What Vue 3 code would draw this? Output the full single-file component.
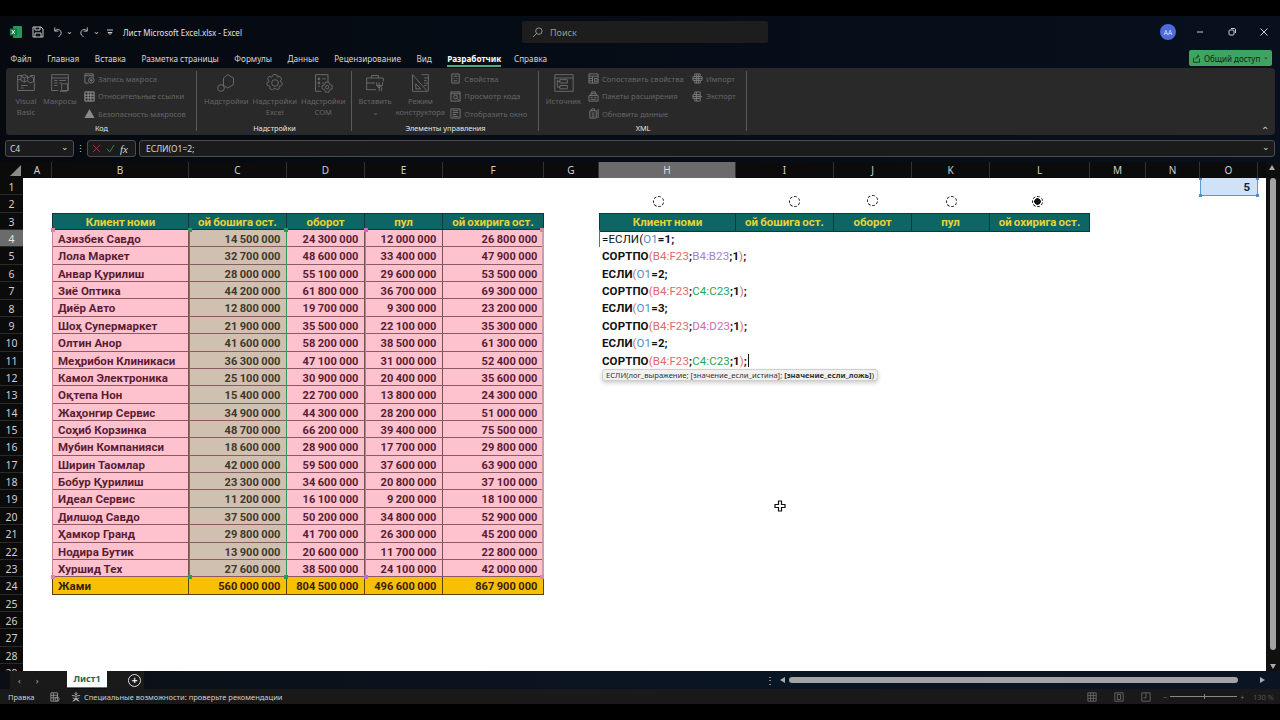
<script setup>
const columns = [
  { name: "A", w: 29 }, { name: "B", w: 137 }, { name: "C", w: 98 }, { name: "D", w: 78 },
  { name: "E", w: 78 }, { name: "F", w: 101 }, { name: "G", w: 55 }, { name: "H", w: 137, on: true },
  { name: "I", w: 98 }, { name: "J", w: 78 }, { name: "K", w: 78 }, { name: "L", w: 100 },
  { name: "M", w: 56 }, { name: "N", w: 54 }, { name: "O", w: 58 },
];
const rowNumbers = Array.from({ length: 29 }, (_, i) => i + 1);
const tabs = ["Файл", "Главная", "Вставка", "Разметка страницы", "Формулы", "Данные", "Рецензирование", "Вид", "Разработчик", "Справка"];
const heads = ["Клиент номи", "ой бошига ост.", "оборот", "пул", "ой охирига ост."];

const rows = [
  ["Азизбек Савдо", "14 500 000", "24 300 000", "12 000 000", "26 800 000"],
  ["Лола Маркет", "32 700 000", "48 600 000", "33 400 000", "47 900 000"],
  ["Анвар Қурилиш", "28 000 000", "55 100 000", "29 600 000", "53 500 000"],
  ["Зиё Оптика", "44 200 000", "61 800 000", "36 700 000", "69 300 000"],
  ["Диёр Авто", "12 800 000", "19 700 000", "9 300 000", "23 200 000"],
  ["Шоҳ Супермаркет", "21 900 000", "35 500 000", "22 100 000", "35 300 000"],
  ["Олтин Анор", "41 600 000", "58 200 000", "38 500 000", "61 300 000"],
  ["Меҳрибон Клиникаси", "36 300 000", "47 100 000", "31 000 000", "52 400 000"],
  ["Камол Электроника", "25 100 000", "30 900 000", "20 400 000", "35 600 000"],
  ["Оқтепа Нон", "15 400 000", "22 700 000", "13 800 000", "24 300 000"],
  ["Жаҳонгир Сервис", "34 900 000", "44 300 000", "28 200 000", "51 000 000"],
  ["Соҳиб Корзинка", "48 700 000", "66 200 000", "39 400 000", "75 500 000"],
  ["Мубин Компанияси", "18 600 000", "28 900 000", "17 700 000", "29 800 000"],
  ["Ширин Таомлар", "42 000 000", "59 500 000", "37 600 000", "63 900 000"],
  ["Бобур Қурилиш", "23 300 000", "34 600 000", "20 800 000", "37 100 000"],
  ["Идеал Сервис", "11 200 000", "16 100 000", "9 200 000", "18 100 000"],
  ["Дилшод Савдо", "37 500 000", "50 200 000", "34 800 000", "52 900 000"],
  ["Ҳамкор Гранд", "29 800 000", "41 700 000", "26 300 000", "45 200 000"],
  ["Нодира Бутик", "13 900 000", "20 600 000", "11 700 000", "22 800 000"],
  ["Хуршид Тех", "27 600 000", "38 500 000", "24 100 000", "42 000 000"],
];
const totals = ["Жами", "560 000 000", "804 500 000", "496 600 000", "867 900 000"];

const sortLines = [
  { col: "B4:B23", cls: "ref-purple" },
  { col: "C4:C23", cls: "ref-green" },
  { col: "D4:D23", cls: "ref-pink" },
  { col: "C4:C23", cls: "ref-green" },
];
const radios = [
  { left: 630, top: 18 },
  { left: 766, top: 18 },
  { left: 844, top: 17 },
  { left: 923, top: 18 },
  { left: 1009, top: 18, on: true },
];
</script>

<template>
  <div class="screen">
    <div class="window">
      <header class="titlebar">
        <div class="quick">
          <svg class="xl" viewBox="0 0 12 12"><rect x="3" y="0" width="9" height="12" rx="1" fill="#1f9a5c" /><rect x="0" y="2.5" width="7" height="7" fill="#107c41" /><path d="M1.8 4l3 4M4.8 4l-3 4" stroke="#fff" stroke-width="1" /></svg>
          <svg class="qi save" viewBox="0 0 12 12"><path d="M1 1h8l2 2v8H1zM3 1v3h5V1M3 11V7h6v4" /></svg>
          <svg class="qi undo" viewBox="0 0 12 12"><path d="M3 1v4h4M3 5c2-3 7-2 7 2 0 2-1 3-3 4" /></svg>
          <span class="chev">⌄</span>
          <svg class="qi redo" viewBox="0 0 12 12"><path d="M9 1v4H5M9 5C7 2 2 3 2 7c0 2 1 3 3 4" /></svg>
          <span class="chev">⌄</span>
          <svg class="qi cust" viewBox="0 0 8 8"><path d="M1 2h6M2 4.5h4l-2 2z" /></svg>
          <span class="doc">Лист Microsoft Excel.xlsx - Excel</span>
        </div>
        <div class="search">
          <svg viewBox="0 0 12 12"><circle cx="7.5" cy="4.5" r="3.5" /><path d="M5 7l-4 4" /></svg>
          <span>Поиск</span>
        </div>
        <div class="winctl">
          <span class="avatar">AA</span>
          <svg viewBox="0 0 10 10"><path d="M2 5h6" /></svg>
          <svg viewBox="0 0 10 10"><rect x="2" y="3" width="5" height="5" rx="1" /><path d="M4 1.5h3.5a1 1 0 0 1 1 1V6" /></svg>
          <svg viewBox="0 0 10 10"><path d="M1.5 1.5l7 7M8.5 1.5l-7 7" /></svg>
        </div>
      </header>

      <nav class="menubar">
        <span v-for="t in tabs" :key="t" class="tab" :class="{ active: t === 'Разработчик' }">{{ t }}</span>
        <button class="share">
          <svg viewBox="0 0 12 12"><path d="M2 5v6h8V6M5 7c0-3 2-4 4-4M7 1l2.500 2L7 5" /></svg>
          Общий доступ <span class="share-chev">⌄</span>
        </button>
      </nav>

      <section class="ribbon">
        <div class="group g-code">
          <div class="tools">
            <div class="big w34">
              <svg viewBox="0 0 24 24"><path d="M2 3h5M17 3h5v18H2V3M2 8h4M6 4l4-2 4 2v5l-4 2-4-2zM6 4l4 2 4-2M10 6v5M14 6l4-2 3 2v4l-3 2-4-2M6 15h8M6 18h3" /></svg>
              <span>Visual<br />Basic</span>
            </div>
            <div class="big w34">
              <svg viewBox="0 0 24 24"><path d="M2 2h20v19h-8M2 2v19h8M2 6h20M5 9h4M11 9h8M5 12h4M11 12h3M5 15h4M14 13h7v7c0 2-2 3-4 2h-5c2-1 2-3 2-4z" /></svg>
              <span>Макросы</span>
            </div>
            <div class="smalls w110">
              <div class="small">
                <svg viewBox="0 0 12 12"><path d="M1 1h9v4M1 1v10h4M1 3h9" /><circle cx="8" cy="8" r="3" /><circle cx="8" cy="8" r="1" fill="#6a6a6a" /></svg>
                Запись макроса
              </div>
              <div class="small lit">
                <svg viewBox="0 0 12 12"><path d="M1 1h10v10H1zM1 4.500h10M1 7.500h10M4.500 1v10M7.500 1v10" /></svg>
                Относительные ссылки
              </div>
              <div class="small">
                <svg viewBox="0 0 12 12"><path class="solid" d="M6 1l5.500 10H.5z" /></svg>
                Безопасность макросов
              </div>
            </div>
          </div>
          <div class="glabel">Код</div>
        </div>

        <div class="group g-addins">
          <div class="tools">
            <div class="big w48">
              <svg viewBox="0 0 24 24"><path d="M14 2l7 4v8l-7 4-5-3V6z" /><circle cx="6" cy="18" r="4" /></svg>
              <span>Надстройки</span>
            </div>
            <div class="big w48">
              <svg viewBox="0 0 24 24"><circle cx="12" cy="12" r="4" /><path d="M10 2h4l1 3 3-1 2 3-2 3 3 2-1 3-3 1 0 3-3 1-2-2-3 2-3-1 0-3-3-1-1-3 3-2-2-3 2-3 3 1z" /></svg>
              <span>Надстройки<br />Excel</span>
            </div>
            <div class="big w48">
              <svg viewBox="0 0 24 24"><path d="M10 22H3V2h15v9M6 6h2v2H6zM11 7h4M6 11h2v2H6zM11 12h2M6 16h2" /><circle cx="17" cy="17" r="2" /><path d="M15 11h4l1 3 3 1v4l-3 1-1 3h-4l-1-3-3-1v-4l3-1z" /></svg>
              <span>Надстройки<br />COM</span>
            </div>
          </div>
          <div class="glabel">Надстройки</div>
        </div>

        <div class="group g-controls">
          <div class="tools">
            <div class="big w46">
              <svg viewBox="0 0 24 24"><path d="M2 6h20v4M2 6v14h11M2 12h10M8 6V3h8v3M17 11v11M21 11v4h-7v-4M14 15l3 3 3-3M20 17v5" /></svg>
              <span>Вставить<br /><i class="dim-chev">⌄</i></span>
            </div>
            <div class="big w46">
              <svg viewBox="0 0 24 24"><path d="M3 2l18 20H3zM7 13l6 6H7zM14 2h8v20M17 6h5M17 9h3M17 12h5M17 15h3" /></svg>
              <span>Режим<br />конструктора</span>
            </div>
            <div class="smalls w90">
              <div class="small">
                <svg viewBox="0 0 12 12"><path d="M2 1h8v10H2zM4 3.500h4M4 6h1M7 6h1M4 8.500h4" /></svg>
                Свойства
              </div>
              <div class="small">
                <svg viewBox="0 0 12 12"><path d="M1 1h10v10H1zM1 3h10" /><circle cx="6" cy="6.500" r="2" /><path d="M7.500 8L10 10.500" /></svg>
                Просмотр кода
              </div>
              <div class="small">
                <svg viewBox="0 0 12 12"><path d="M1 1h10v10H1zM3 3h6M3 5h6M3 7h4M3 9h6" /></svg>
                Отобразить окно
              </div>
            </div>
          </div>
          <div class="glabel">Элементы управления</div>
        </div>

        <div class="group g-xml">
          <div class="tools">
            <div class="big w43">
              <svg viewBox="0 0 24 24"><path d="M1 2h22v20H1zM1 6h22M7 8h9v4H7zM7 15h9v4H7zM4 8v9h3M4 10h3" /></svg>
              <span>Источник</span>
            </div>
            <div class="smalls w97">
              <div class="small">
                <svg viewBox="0 0 12 12"><path d="M1 1h10v10H1zM1 3.500h10M5 3.500V11M1 6h4M1 8.500h4M7 6h3v3H7z" /></svg>
                Сопоставить свойства
              </div>
              <div class="small">
                <svg viewBox="0 0 12 12"><path d="M1 5h10v6H1zM3 5V3h6v2M4 3V1h4v2M3 7h2M7 7h2M3 9h6" /></svg>
                Пакеты расширения
              </div>
              <div class="small">
                <svg viewBox="0 0 12 12"><path d="M2 3h7v8H2zM4 3V1h3v2M4 5.500h3M4 7.500h3M4 9.500h3M11 1v10" /></svg>
                Обновить данные
              </div>
            </div>
            <div class="smalls">
              <div class="small">
                <svg viewBox="0 0 12 12"><path d="M3 1h6v3H3zM1 4h10v4H1zM3 8h6v3H3zM5 1v10M7 1v10M1 6h10" /></svg>
                Импорт
              </div>
              <div class="small">
                <svg viewBox="0 0 12 12"><path d="M3 1h6v3H3zM1 4h8v4H1zM3 8h6v3H3zM5 1v10M1 6h10" /></svg>
                Экспорт
              </div>
            </div>
          </div>
          <div class="glabel">XML</div>
        </div>
        <span class="collapse">⌃</span>
      </section>

      <div class="formulabar">
        <div class="namebox"><span>C4</span><i>⌄</i></div>
        <span class="fdots">⋮</span>
        <div class="fxbox">
          <svg viewBox="0 0 10 10" class="x"><path d="M1 1l8 8M9 1l-8 8" /></svg>
          <svg viewBox="0 0 10 10" class="v"><path d="M1 5l3 4 5-8" /></svg>
          <em>fx</em>
        </div>
        <div class="finput">ЕСЛИ(О1=2;<i>⌄</i></div>
      </div>

      <div class="colheads">
        <div class="corner"><span></span></div>
        <div v-for="c in columns" :key="c.name" class="colhead" :class="{ on: c.on }" :style="{ width: c.w + 'px' }">{{ c.name }}</div>
        <div class="vs-top"><span class="arr-up"></span></div>
      </div>

      <div class="sheetrow">
        <div class="rowheads">
          <div v-for="n in rowNumbers" :key="n" class="rowhead" :class="{ on: n === 4 }">{{ n }}</div>
        </div>

        <main class="sheet">
          <div class="data-table">
            <div v-for="(h, i) in heads" :key="h" class="th" :class="{ first: i === 0 }">{{ h }}</div>
            <template v-for="row in rows" :key="row[0]">
              <div v-for="(v, i) in row" :key="i" class="td" :class="['c' + i]">{{ v }}</div>
            </template>
            <div v-for="(v, i) in totals" :key="v" class="td total" :class="['c' + i]">{{ v }}</div>

            <div class="range-layer">
              <div class="range r-all">
                <i class="h tl"></i><i class="h tr"></i><i class="h bl"></i><i class="h br"></i>
              </div>
              <div class="range r-c">
                <i class="h tl"></i><i class="h tr"></i><i class="h bl"></i><i class="h br"></i>
              </div>
              <div class="range r-e">
                <i class="h tl"></i><i class="h bl"></i>
              </div>
            </div>
          </div>

          <div class="side">
            <div class="side-head">
              <div v-for="(h, i) in heads" :key="h" class="th" :class="{ first: i === 0 }">{{ h }}</div>
            </div>
            <div class="edit">
              <div class="fl first-line">=ЕСЛИ(<span class="ref-blue">О1</span><b>=1;</b></div>
              <template v-for="(line, i) in sortLines" :key="i">
                <div v-if="i > 0" class="fl"><b>ЕСЛИ</b><span class="ref-red">(</span><span class="ref-blue">О1</span><b>={{ i === 1 ? 2 : i === 2 ? 3 : 2 }};</b></div>
                <div class="fl"><b>СОРТПО</b><span class="ref-red">(B4:F23</span><b>;</b><span :class="line.cls">{{ line.col }}</span><b>;1</b><span class="ref-red">)</span><b>;</b><span v-if="i === 3" class="caret"></span></div>
              </template>
              <div class="hint">ЕСЛИ(лог_выражение; [значение_если_истина]; <b>[значение_если_ложь]</b>)</div>
            </div>
          </div>

          <div class="o1">5<i class="h2 a"></i><i class="h2 b"></i><i class="h2 c"></i><i class="h2 d"></i></div>

          <span v-for="(r, i) in radios" :key="i" class="radio" :class="{ on: r.on }" :style="{ left: r.left + 'px', top: r.top + 'px' }"></span>

          <svg class="cursor" viewBox="0 0 12 12"><path d="M4.500 1h3v3.500H11v3H7.500V11h-3V7.500H1v-3h3.500z" /></svg>
        </main>

        <aside class="vscroll">
          <span class="vthumb"></span>
          <span class="arr-down"></span>
        </aside>
      </div>

      <div class="tabbar">
        <div class="nav"><span>‹</span><span>›</span></div>
        <div class="sheet-tab">Лист1</div>
        <div class="addwrap"><span class="add">+</span></div>
        <div class="hscroll">
          <span class="hdots">⋮</span>
          <span class="arr-left"></span>
          <span class="hthumb"></span>
          <span class="arr-right"></span>
        </div>
      </div>

      <footer class="status">
        <span class="st-mode">Правка</span>
        <svg class="st-ico" viewBox="0 0 12 12"><path d="M1 1h8v10H1zM1 4h8M1 7h8M4 1v10" /><circle cx="8.500" cy="8.500" r="2.500" /></svg>
        <svg class="st-ico acc" viewBox="0 0 12 12"><circle cx="6" cy="2" r="1.200" /><path d="M1 4l5 1 5-1M6 5v2l-3 4M6 7l3 4M2 7l8 4M10 7l-8 4" /></svg>
        <span class="st-text">Специальные возможности: проверьте рекомендации</span>
        <div class="st-right">
          <svg viewBox="0 0 12 12"><path d="M1 1h10v10H1zM1 4.300h10M1 7.600h10M4.300 1v10M7.600 1v10" /></svg>
          <svg viewBox="0 0 12 12"><path d="M1 1h10v10H1zM4 3h4v6H4z" /></svg>
          <svg viewBox="0 0 12 12"><path d="M1 1h10v10H1zM6 1v6H3" /></svg>
          <div class="zoom"><span>−</span><div class="slider"><i></i></div><span>+</span></div>
          <span class="pct">130 %</span>
        </div>
      </footer>
    </div>
  </div>
</template>

<style>
html,
body {
  margin: 0;
  background: #000;
}
</style>

<style scoped>
.screen {
  width: 1280px;
  height: 720px;
  padding: 16px 0;
  box-sizing: border-box;
  background: #000;
  overflow: hidden;
  font-family: "Noto Sans", "Open Sans", sans-serif;
}
.window {
  height: 688px;
  display: flex;
  flex-direction: column;
  background: linear-gradient(90deg, #060a10, #060d18 60%, #07101c);
  color: #ddd;
}
svg {
  fill: none;
  stroke: currentColor;
  stroke-width: 1;
}

/* title */
.titlebar {
  height: 32px;
  display: flex;
  align-items: center;
  position: relative;
  flex: none;
}
.quick {
  display: flex;
  align-items: center;
  padding-left: 10px;
  color: #c8c8c8;
}
.xl {
  width: 12px;
  height: 12px;
  margin-right: 10px;
  stroke: none;
  fill: #107c41;
}
.xl rect {
  stroke: none;
}
.qi {
  width: 11px;
  height: 12px;
}
.save {
  margin-left: 0;
  width: 12px;
}
.undo {
  margin-left: 8px;
}
.redo {
  margin-left: 6px;
}
.cust {
  width: 8px;
  height: 8px;
  margin-left: 6px;
}
.chev {
  font-size: 8px;
  margin: -4px 0 0 3px;
  width: 7px;
}
.doc {
  font-size: 8px;
  margin-left: 9px;
  color: #e2e2e2;
}
.search {
  position: absolute;
  left: 522px;
  top: 5px;
  width: 246px;
  height: 22px;
  box-sizing: border-box;
  padding-left: 10px;
  background: #1d1d1d;
  border-radius: 2px;
  display: flex;
  align-items: center;
  gap: 7px;
  font-size: 9px;
  color: #9a9a9a;
}
.search svg {
  width: 11px;
  height: 11px;
}
.winctl {
  margin-left: auto;
  display: flex;
  align-items: center;
  padding-right: 11px;
  color: #cfcfcf;
}
.winctl svg {
  width: 10px;
  height: 10px;
  margin-left: 22px;
}
.avatar {
  width: 16px;
  height: 16px;
  border-radius: 50%;
  background: #4f6bd8;
  color: #dfe6ff;
  font-size: 6.5px;
  display: flex;
  align-items: center;
  justify-content: center;
  margin-right: -3px;
}

/* menu */
.menubar {
  height: 20px;
  flex: none;
  display: flex;
  align-items: center;
  padding-left: 10.500px;
  gap: 15.500px;
  font-size: 8.200px;
  color: #d6d6d6;
  position: relative;
}
.tab {
  position: relative;
}
.tab.active {
  color: #fff;
  font-weight: 700;
  margin-right: -3px;
}
.tab.active::after {
  content: "";
  position: absolute;
  left: 0;
  right: 0;
  bottom: -3px;
  height: 1.5px;
  background: #4caf76;
}
.share {
  position: absolute;
  left: 1189px;
  top: 2px;
  width: 83px;
  height: 16px;
  background: #3fa45f;
  border: 0;
  border-radius: 2px;
  color: #10240f;
  font: inherit;
  font-size: 8px;
  display: flex;
  align-items: center;
  gap: 3px;
  padding: 0 2px 0 3px;
  white-space: nowrap;
}
.share svg {
  width: 9px;
  height: 9px;
}
.share-chev {
  font-size: 7px;
  margin-top: -4px;
}

/* ribbon */
.ribbon {
  margin: 0 5px 0 6px;
  height: 67px;
  flex: none;
  background: #292929;
  border-radius: 4px;
  display: flex;
  position: relative;
  font-size: 7.600px;
  color: #666;
}
.group {
  display: flex;
  flex-direction: column;
  position: relative;
  box-sizing: border-box;
  padding-top: 3px;
}
.group::after {
  content: "";
  position: absolute;
  right: 0;
  top: 3px;
  bottom: 4px;
  width: 1px;
  background: #5a5a5a;
}
.g-code {
  width: 191px;
  padding-left: 3px;
}
.g-addins {
  width: 155px;
  padding-left: 5px;
}
.g-controls {
  width: 187px;
  padding-left: 1px;
}
.g-xml {
  width: 208px;
  padding-left: 3px;
}
.tools {
  display: flex;
  flex: 1;
  gap: 0;
}
.big {
  display: flex;
  flex-direction: column;
  align-items: center;
  text-align: center;
  line-height: 10.500px;
  color: #666;
  white-space: nowrap;
}
.big svg {
  width: 20px;
  height: 20px;
  margin: 2px 0 3px;
  color: #757575;
}
.dim-chev {
  font-style: normal;
}
.w34 {
  width: 34px;
}
.w48 {
  width: 48.500px;
}
.w46 {
  width: 46px;
}
.w43 {
  width: 43px;
}
.smalls {
  display: flex;
  flex-direction: column;
  gap: 0;
  margin: -1px 0 0 7px;
}
.w110 {
  width: 110px;
}
.w90 {
  width: 92px;
}
.w97 {
  width: 97px;
  margin-left: 3px;
}
.small {
  height: 17.500px;
  display: flex;
  align-items: center;
  gap: 3px;
  white-space: nowrap;
  color: #666;
}
.small svg {
  width: 11px;
  height: 11px;
  flex: none;
  color: #7a7a7a;
}
.small.lit svg {
  color: #a0a0a0;
}
.solid {
  fill: #8a8a8a;
  stroke: none;
}
.glabel {
  position: absolute;
  left: 0;
  right: 0;
  bottom: 2px;
  text-align: center;
  color: #e6e6e6;
  font-size: 7.300px;
  line-height: 10px;
}
.collapse {
  position: absolute;
  right: 6px;
  bottom: -2px;
  color: #cfcfcf;
  font-size: 10px;
}

/* formula */
.formulabar {
  height: 17px;
  flex: none;
  margin-top: 5px;
  padding: 0 5px;
  display: flex;
  align-items: stretch;
  font-size: 8.500px;
  color: #d8d8d8;
}
.namebox,
.fxbox,
.finput {
  background: #1b1b1b;
  border: 1px solid #4d4d4d;
  border-radius: 3px;
  box-sizing: border-box;
  display: flex;
  align-items: center;
}
.namebox {
  width: 69px;
  padding: 0 4px;
  justify-content: space-between;
}
.namebox i,
.finput i {
  font-style: normal;
  margin-top: -4px;
}
.fdots {
  width: 13px;
  text-align: center;
  line-height: 17px;
}
.fxbox {
  width: 49px;
  padding-left: 4px;
  gap: 5px;
}
.fxbox svg {
  width: 9px;
  height: 9px;
}
.fxbox .x {
  color: #a04040;
}
.fxbox .v {
  color: #3e8f5e;
}
.fxbox em {
  font-family: "Liberation Serif", serif;
  font-size: 11px;
}
.finput {
  margin-left: 3px;
  flex: 1;
  padding: 0 4px 0 6px;
  justify-content: space-between;
}

/* column heads */
.colheads {
  height: 16px;
  flex: none;
  margin-top: 5px;
  display: flex;
  background: #0b0b0b;
  font-size: 10px;
  color: #cfcfcf;
}
.corner {
  width: 23px;
  flex: none;
  position: relative;
}
.corner span {
  position: absolute;
  right: 2px;
  bottom: 2px;
  border-style: solid;
  border-width: 0 0 11px 11px;
  border-color: transparent transparent #8b8b8b transparent;
}
.colhead {
  flex: none;
  box-sizing: border-box;
  border-right: 1px solid #333;
  text-align: center;
  line-height: 17px;
}
.colhead.on {
  background: #6b6b6b;
  color: #ddd;
  border-bottom: 1px solid #2f8f5f;
}
.vs-top {
  flex: 1;
  position: relative;
  background: #0e0e0e;
  margin-left: 8px;
}
.arr-up {
  position: absolute;
  left: 3px;
  top: 3px;
  border-style: solid;
  border-width: 0 3px 5px 3px;
  border-color: transparent transparent #aaa transparent;
}

/* sheet */
.sheetrow {
  flex: 1;
  min-height: 0;
  display: flex;
  overflow: hidden;
}
.rowheads {
  width: 23px;
  flex: none;
  background: #0b0b0b;
  overflow: hidden;
  font-size: 10.500px;
  color: #cfcfcf;
}
.rowhead {
  height: 17.360px;
  line-height: 18px;
  text-align: center;
  box-sizing: border-box;
  border-bottom: 1px solid #2a2a2a;
}
.rowhead.on {
  background: #6b6b6b;
  color: #e6e6e6;
}
.sheet {
  width: 1243px;
  flex: none;
  position: relative;
  background: #fff;
  display: flex;
  align-items: flex-start;
  padding: 34.700px 0 0 29px;
  box-sizing: border-box;
  font-family: Roboto, sans-serif;
  font-weight: 700;
  font-size: 11.500px;
}
.data-table {
  display: grid;
  grid-template-columns: 137px 98px 78px 78px 101px;
  grid-auto-rows: 17.360px;
  position: relative;
}
.th {
  background: #0d6664;
  color: #e5d23b;
  text-align: center;
  line-height: 17px;
  border: 1px solid #0c3a3c;
  border-left-width: 0;
  box-sizing: border-box;
  white-space: nowrap;
  word-spacing: -0.8px;
}
.th.first {
  border-left-width: 1px;
}
.td {
  background: #fdc2cd;
  color: #5a1c34;
  border-right: 1px solid #7c5058;
  border-bottom: 1px solid #8a5b64;
  box-sizing: border-box;
  line-height: 19px;
  padding: 0 5.500px 0 6px;
  text-align: right;
  font-size: 11.100px;
  word-spacing: -0.5px;
  white-space: nowrap;
  letter-spacing: 0.05px;
}
.td.c0 {
  text-align: left;
  font-size: 11.500px;
  word-spacing: 0;
  letter-spacing: 0.05px;
}
.td.c1 {
  background: #cfc0af;
  color: #43382b;
}
.td.total {
  background: #f7c001;
  color: #3c1e10;
  border-color: #5c4300;
  border-bottom: 1px solid #5c4300;
}
.td.total.c0 {
  border-left: 1px solid #5c4300;
  padding-left: 5px;
}
.range-layer {
  position: absolute;
  inset: 0;
  display: grid;
  grid-template-columns: 137px 98px 78px 78px 101px;
  grid-template-rows: repeat(22, 17.360px);
  pointer-events: none;
}
.range {
  position: relative;
}
.r-all {
  grid-column: 1 / 6;
  grid-row: 2 / 22;
  border-left: 1px solid #c9848f;
  border-right: 2px solid #c9a0a6;
}
.r-c {
  grid-column: 2 / 3;
  grid-row: 2 / 22;
  border-left: 1px solid #2f9a53;
  border-right: 1px solid #2f9a53;
}
.r-e {
  grid-column: 4 / 5;
  grid-row: 2 / 22;
  border-left: 1px solid #c96cc0;
}
.h {
  position: absolute;
  width: 4px;
  height: 4px;
  background: #d98a98;
}
.r-c .h {
  background: #2f9a53;
}
.r-e .h {
  background: #c96cc0;
}
.tl {
  left: -2px;
  top: -2px;
}
.tr {
  right: -2px;
  top: -2px;
}
.bl {
  left: -2px;
  bottom: -2px;
}
.br {
  right: -2px;
  bottom: -2px;
}

.side {
  margin-left: 55px;
  width: 491px;
}
.side-head {
  display: grid;
  grid-template-columns: 137px 98px 78px 78px 100px;
  height: 17.360px;
}
.edit {
  position: relative;
  color: #111;
  font-weight: 400;
  border-left: 1px solid #2f8f5f;
  height: 17px;
  padding-left: 2px;
  white-space: nowrap;
}
.fl {
  height: 17.360px;
  line-height: 18.500px;
  letter-spacing: 0.1px;
}
.fl b {
  font-weight: 700;
}
.ref-blue {
  color: #4a8fc9;
}
.ref-red {
  color: #de6a6a;
}
.ref-purple {
  color: #a57fd6;
}
.ref-green {
  color: #2ba356;
}
.ref-pink {
  color: #d766b4;
}
.caret {
  display: inline-block;
  width: 1px;
  height: 13px;
  background: #111;
  margin-left: 1px;
  vertical-align: -2px;
}
.hint {
  position: absolute;
  left: 2px;
  top: 139px;
  height: 12px;
  line-height: 11px;
  padding: 0 3px;
  background: #f1f1f1;
  border: 1px solid #cfcfcf;
  border-radius: 3px;
  box-shadow: 0 2px 4px rgba(0, 0, 0, 0.2);
  font-size: 7.640px;
  font-family: "Noto Sans", sans-serif;
  color: #333;
  box-sizing: border-box;
}
.o1 {
  position: absolute;
  left: 1177px;
  top: 0;
  width: 58px;
  height: 18px;
  box-sizing: border-box;
  background: #cfe2f8;
  border: 1px solid #5b9bd5;
  border-top: 0;
  color: #12263f;
  text-align: right;
  line-height: 18px;
  padding-right: 7px;
}
.h2 {
  position: absolute;
  width: 3px;
  height: 3px;
  background: #4a8fd0;
}
.h2.a {
  left: -2px;
  top: -1px;
}
.h2.b {
  right: -2px;
  top: -1px;
}
.h2.c {
  left: -2px;
  bottom: -2px;
}
.h2.d {
  right: -2px;
  bottom: -2px;
}
.radio {
  position: absolute;
  width: 11px;
  height: 11px;
  box-sizing: border-box;
  border: 1.500px dashed #222;
  border-radius: 50%;
  background: #fff;
}
.radio.on {
  background: radial-gradient(circle, #111 0 3px, #fff 3.500px);
}
.cursor {
  position: absolute;
  left: 751px;
  top: 322px;
  width: 12px;
  height: 12px;
  fill: #fff;
  stroke: #111;
  stroke-width: 1.200;
}
.vscroll {
  flex: 1;
  position: relative;
  background: #101010;
}
.vthumb {
  position: absolute;
  left: 4px;
  top: 0;
  width: 6px;
  height: 472px;
  border-radius: 3px;
  background: #a4a4a4;
}
.arr-down {
  position: absolute;
  left: 4px;
  bottom: 2px;
  border-style: solid;
  border-width: 5px 3px 0 3px;
  border-color: #aaa transparent transparent transparent;
}

/* tabs */
.tabbar {
  height: 18px;
  flex: none;
  display: flex;
  position: relative;
  background: linear-gradient(90deg, #0b0f15, #0a1524 60%, #0b1422);
  font-size: 9px;
}
.nav {
  width: 57px;
  margin-left: 10px;
  background: #1a1a1a;
  color: #aaa;
  display: flex;
  gap: 15px;
  padding-left: 8px;
  box-sizing: border-box;
  align-items: center;
}
.sheet-tab {
  width: 40px;
  height: 16px;
  background: #fff;
  color: #1c6a44;
  font-weight: 700;
  text-align: center;
  line-height: 16px;
  border-bottom: 1px solid #2f8f5f;
}
.addwrap {
  width: 37px;
  box-sizing: border-box;
  background: #1a1a1a;
  display: flex;
  align-items: center;
  padding-left: 21px;
}
.add {
  width: 11px;
  height: 11px;
  flex: none;
  border: 1px solid #ddd;
  border-radius: 50%;
  display: flex;
  align-items: center;
  justify-content: center;
  font-size: 10px;
  line-height: 1;
  color: #eee;
  font-weight: 700;
}
.hscroll {
  position: absolute;
  left: 765px;
  top: 0;
  right: 0;
  height: 18px;
  color: #ddd;
}
.hdots {
  position: absolute;
  left: 0;
  top: 2px;
  font-size: 10px;
}
.arr-left {
  position: absolute;
  left: 15px;
  top: 6px;
  border-style: solid;
  border-width: 3px 5px 3px 0;
  border-color: transparent #aaa transparent transparent;
}
.hthumb {
  position: absolute;
  left: 24px;
  top: 6px;
  width: 449px;
  height: 6px;
  border-radius: 3px;
  background: #a4a4a4;
}
.arr-right {
  position: absolute;
  left: 495px;
  top: 6px;
  border-style: solid;
  border-width: 3px 0 3px 5px;
  border-color: transparent transparent transparent #aaa;
}

/* status */
.status {
  height: 15px;
  flex: none;
  background: #191919;
  display: flex;
  align-items: center;
  padding: 0 5px 0 8px;
  font-size: 7.500px;
  color: #cfcfcf;
}
.st-mode {
  width: 25px;
}
.st-ico {
  width: 10px;
  height: 10px;
  color: #999;
  margin-left: 17px;
  flex: none;
}
.st-ico.acc {
  margin-left: 11px;
  color: #bbb;
}
.st-text {
  margin-left: 3px;
}
.st-right {
  margin-left: auto;
  display: flex;
  align-items: center;
  color: #6e6e6e;
}
.st-right svg {
  width: 10px;
  height: 10px;
  margin-right: 17px;
}
.zoom {
  display: flex;
  align-items: center;
  gap: 3px;
  width: 85px;
  margin-left: -5px;
}
.slider {
  width: 67px;
  height: 1px;
  background: #888;
  position: relative;
}
.slider i {
  position: absolute;
  left: 34px;
  top: -2px;
  width: 1px;
  height: 5px;
  background: #888;
}
.pct {
  margin-left: 5px;
  color: #555;
  width: 22px;
  white-space: nowrap;
}
</style>
